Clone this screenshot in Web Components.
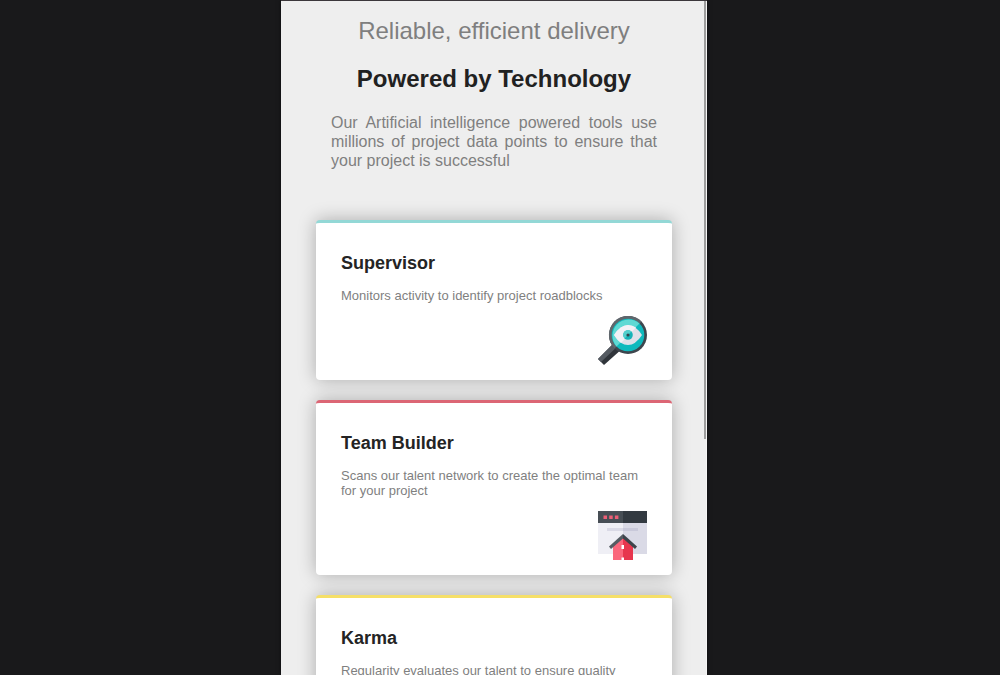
<!DOCTYPE html>
<html lang="en">
<head>
<meta charset="utf-8">
<meta name="viewport" content="width=device-width, initial-scale=1">
<title>Reliable, efficient delivery</title>
<style>
  html, body { margin: 0; height: 100%; background: #19191b; overflow: hidden; }
  body { font-family: "Liberation Sans", Arial, sans-serif; color: #7f7f7f; }
</style>
</head>
<body>
<phone-frame>
  <intro-header>
    <span slot="kicker">Reliable, efficient delivery</span>
    <span slot="title">Powered by Technology</span>
    Our Artificial intelligence powered tools use millions of project data points to ensure that your project is successful
  </intro-header>
  <feature-list>
    <feature-card style="--accent: #93d8d6">
      <span slot="title">Supervisor</span>
      Monitors activity to identify project roadblocks
      <icon-supervisor slot="icon"></icon-supervisor>
    </feature-card>
    <feature-card style="--accent: #dc6675">
      <span slot="title">Team Builder</span>
      Scans our talent network to create the optimal team for your project
      <icon-team slot="icon"></icon-team>
    </feature-card>
    <feature-card style="--accent: #f5df68">
      <span slot="title">Karma</span>
      Regularity evaluates our talent to ensure quality
    </feature-card>
  </feature-list>
</phone-frame>

<script>
  const define = (name, html) => {
    const template = document.createElement('template');
    template.innerHTML = html;
    customElements.define(name, class extends HTMLElement {
      constructor() {
        super();
        this.attachShadow({ mode: 'open' }).append(template.content.cloneNode(true));
      }
    });
  };

  define('phone-frame', `
    <style>
      :host { display: grid; grid-template-columns: 281fr 426fr 293fr; height: 100vh; }
      .screen {
        grid-column: 2; display: flex; box-sizing: border-box; min-width: 0; min-height: 0;
        border-top: 1px solid #3b373b; background: #eeeeee;
        box-shadow: 0 0 4px #00000080;
      }
      main { flex: 1; min-width: 0; overflow: hidden; margin-right: -3px; }
      .track { flex: none; width: 3px; border-right: 1px solid #f5f5f5; box-sizing: border-box; }
      .thumb { height: 65%; background: #9d9d9d; }
    </style>
    <div class="screen">
      <main><slot></slot></main>
      <div class="track"><div class="thumb"></div></div>
    </div>`);

  define('intro-header', `
    <style>
      :host { display: block; padding: 16px 50px 0; }
      h2, h1, p { margin: 0; font-size: 24px; line-height: 28px; text-align: center; }
      h2 { font-weight: 400; }
      h1 { margin-top: 20px; color: #212121; }
      p { margin-top: 20px; font-size: 16px; line-height: 19px; text-align: justify; }
    </style>
    <h2><slot name="kicker"></slot></h2>
    <h1><slot name="title"></slot></h1>
    <p><slot></slot></p>`);

  define('feature-list', `
    <style>
      :host { display: flex; flex-direction: column; gap: 20px; padding: 50px 35px 20px; }
    </style>
    <slot></slot>`);

  define('feature-card', `
    <style>
      :host {
        display: block; padding: 30px 25px 15px; border-top: 3px solid var(--accent);
        border-radius: 4px; background: #fff; box-shadow: 0 0 18px #00000048;
      }
      h3 { margin: 0 0 15px; font-size: 18px; line-height: 20px; color: #242424; }
      p { margin: 0; font-size: 13px; line-height: 15px; }
      .icon { display: flex; justify-content: flex-end; height: 49px; margin-top: 13px; }
    </style>
    <h3><slot name="title"></slot></h3>
    <p><slot></slot></p>
    <div class="icon"><slot name="icon"></slot></div>`);

  define('icon-supervisor', `
    <style>:host { display: block; } svg { display: block; }</style>
    <svg width="49" height="49" viewBox="0 0 49 49" aria-hidden="true">
      <path d="M0 43 18 25l7 7L6 49z" fill="#30353b"/>
      <path d="M0 43 18 25l3.500 3.500L3 46z" fill="#555b62"/>
      <circle cx="30" cy="19" r="19" fill="#3e464e"/>
      <path d="M16.500 32.500A19 19 0 0 1 43.500 5.500z" fill="#5f666c"/>
      <circle cx="30" cy="19" r="16.300" fill="#0fb9bd"/>
      <path d="M18.500 30.500A16.300 16.300 0 0 1 41.500 7.500z" fill="#5fd9d4"/>
      <path d="M16 19Q22.500 9 30 9T44 19Q37.500 29 30 29T16 19z" fill="#dfe0e9"/>
      <path d="M16 19Q22.500 9 30 9 34.500 9 38 11.500L23 27Q19 24 16 19z" fill="#f1f1f6"/>
      <circle cx="30" cy="19" r="4.800" fill="#16b3b8"/>
      <path d="M26.600 22.400a4.800 4.800 0 0 1 6.800-6.800z" fill="#54cfcc"/>
      <circle cx="30" cy="19" r="1.600" fill="#34454d"/>
    </svg>`);

  define('icon-team', `
    <style>:host { display: block; } svg { display: block; }</style>
    <svg width="49" height="49" viewBox="0 0 49 49" aria-hidden="true">
      <path d="M0 11h25v32H0z" fill="#efeff5"/>
      <path d="M25 11h24v32H25z" fill="#dadae6"/>
      <path d="M0 0h25v12H0z" fill="#474e55"/>
      <path d="M25 0h24v12H25z" fill="#333a41"/>
      <path d="M5.500 4.500H9V8H5.500zm5.700 0h3.500V8h-3.500zm5.700 0h3.500V8h-3.500z" fill="#ed5f76"/>
      <path d="M9 17h16v3H9z" fill="#dadae6"/>
      <path d="M25 17h15v3H25z" fill="#c9c9da"/>
      <path d="M15 34 25 25v24H15z" fill="#fa667c"/>
      <path d="M25 25 35 34v15H25z" fill="#e7364e"/>
      <path d="M25 23 11 35.500l2 2.500L25 27.500z" fill="#555c63"/>
      <path d="m25 23 14 12.500-2 2.500L25 27.500z" fill="#3d444b"/>
      <path d="M23.500 34H26v4h-2.500zm0 12.500H26V49h-2.500z" fill="#fff"/>
    </svg>`);
</script>
</body>
</html>
